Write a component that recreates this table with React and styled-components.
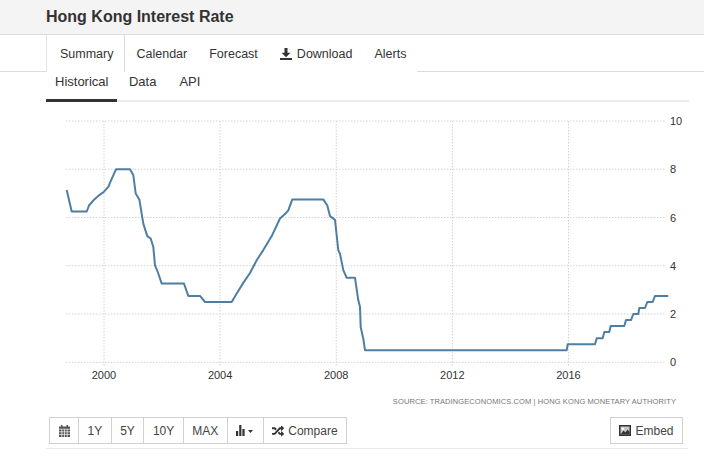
import React from 'react'
import styled, { createGlobalStyle } from 'styled-components'
import { FaRandom } from 'react-icons/fa'

const GlobalStyle = createGlobalStyle`
  body {
    margin: 0;
    background: #fff;
    font-family: "Liberation Sans", Arial, sans-serif;
    color: #333;
  }
`

// traced from the chart: [page x, rate]
const series = [
  [66.7, 7.14], [71.7, 6.25], [86.7, 6.25], [89, 6.5], [94.3, 6.75], [100, 6.95],
  [104, 7.07], [108.3, 7.27], [111.7, 7.6], [116, 8.0], [130, 8.0], [133.3, 7.76],
  [135.7, 7.0], [139.3, 6.75], [143.3, 5.75], [147.3, 5.23], [150.7, 5.13], [153.3, 4.78],
  [155, 4.02], [158.3, 3.68], [161.7, 3.26], [184, 3.26], [188.3, 2.75], [200, 2.75],
  [205, 2.5], [231.7, 2.5], [236.7, 2.85], [243.3, 3.29], [250, 3.7], [256.7, 4.23],
  [263.3, 4.65], [271.7, 5.23], [280, 5.96], [285, 6.14], [288.3, 6.3], [292.3, 6.75],
  [323.3, 6.75], [327.3, 6.5], [330, 6.06], [335, 5.9], [338.3, 4.65], [340, 4.5],
  [343.3, 3.82], [346.7, 3.5], [355, 3.5], [358.3, 2.57], [360, 2.3], [360.7, 1.46],
  [363.3, 0.98], [365, 0.5], [566.7, 0.5], [567.7, 0.75], [595, 0.75], [596.7, 1.0],
  [602.7, 1.0], [604.3, 1.25], [609.3, 1.25], [610.7, 1.5], [624.3, 1.5], [626, 1.75],
  [631, 1.75], [633.3, 2.0], [638.3, 2.0], [639.3, 2.25], [645, 2.25], [647.3, 2.5],
  [652.7, 2.5], [655, 2.75], [668.3, 2.75],
]

const X0 = 46
const yOf = (v) => 260.3 - v * 24.13
const years = [2000, 2004, 2008, 2012, 2016]
const xOfYear = (yr) => 58 + (yr - 2000) * 29.03
const ticks = [0, 2, 4, 6, 8, 10]

const tabs = ['Summary', 'Calendar', 'Forecast', 'Download', 'Alerts']
const subTabs = ['Historical', 'Data', 'API']
const ranges = ['1Y', '5Y', '10Y', 'MAX']

function DownloadIcon() {
  return (
    <svg width="12" height="12" viewBox="0 0 12 12">
      <rect x="4.5" y="0" width="3" height="5" fill="#333" />
      <polygon points="1.5,4.8 10.5,4.8 6,9.3" fill="#333" />
      <rect x="0" y="10" width="12" height="2" fill="#333" />
    </svg>
  )
}

function CalendarIcon() {
  return (
    <svg width="11" height="12" viewBox="0 0 11 12">
      <rect x="0" y="1.5" width="11" height="10.5" fill="#555" />
      <rect x="2" y="0" width="1.5" height="3" fill="#555" />
      <rect x="7.5" y="0" width="1.5" height="3" fill="#555" />
      <g stroke="#fff" strokeWidth="0.7">
        <line x1="0" y1="4.2" x2="11" y2="4.2" />
        <line x1="0" y1="6.8" x2="11" y2="6.8" />
        <line x1="0" y1="9.4" x2="11" y2="9.4" />
        <line x1="2.8" y1="4.2" x2="2.8" y2="12" />
        <line x1="5.5" y1="4.2" x2="5.5" y2="12" />
        <line x1="8.2" y1="4.2" x2="8.2" y2="12" />
      </g>
    </svg>
  )
}

function BarsIcon() {
  return (
    <svg width="18" height="11" viewBox="0 0 18 11">
      <rect x="0" y="6" width="2.2" height="5" fill="#333" />
      <rect x="3.2" y="0" width="2.2" height="11" fill="#333" />
      <rect x="6.4" y="4" width="2.2" height="7" fill="#333" />
      <polygon points="12,5 17,5 14.5,8" fill="#333" />
    </svg>
  )
}

function PictureIcon() {
  return (
    <svg width="12" height="11" viewBox="0 0 12 11">
      <rect x="0" y="0" width="12" height="11" fill="#333" />
      <rect x="1.5" y="1.5" width="9" height="8" fill="#c8c8c8" />
      <circle cx="3.8" cy="3.8" r="1.2" fill="#fff" />
      <polygon points="1.5,9.5 4.5,5.5 6.5,7.5 8.5,4.5 10.5,7 10.5,9.5" fill="#333" />
    </svg>
  )
}

function Chart() {
  const d = series
    .map(([x, v], i) => `${i ? 'L' : 'M'}${(x - X0).toFixed(1)},${yOf(v).toFixed(1)}`)
    .join(' ')
  return (
    <ChartSvg width="642" height="294" viewBox="0 0 642 294">
      <g stroke="#d2d2d2" strokeWidth="1" strokeDasharray="1.5,1.5">
        {ticks.map((t) => (
          <line key={t} x1="20" x2="619" y1={yOf(t)} y2={yOf(t)} />
        ))}
        {years.map((yr) => (
          <line key={yr} x1={xOfYear(yr)} x2={xOfYear(yr)} y1="19" y2="265" />
        ))}
      </g>
      <path d={d} fill="none" stroke="#4f7ea5" strokeWidth="2" strokeLinejoin="round" />
      <g fontSize="11" fill="#333" fontFamily="Liberation Sans, Arial, sans-serif">
        {ticks.map((t) => (
          <text key={t} x="624" y={yOf(t) + 4}>{t}</text>
        ))}
        {years.map((yr) => (
          <text key={yr} x={xOfYear(yr)} y="277" textAnchor="middle">{yr}</text>
        ))}
      </g>
    </ChartSvg>
  )
}

export default function App() {
  return (
    <>
      <GlobalStyle />
      <Header>
        <Title>Hong Kong Interest Rate</Title>
      </Header>
      <TabBar>
        {tabs.map((t, i) => (
          <Tab key={t} $active={i === 0}>
            {t === 'Download' && <DownloadIcon />}
            {t}
          </Tab>
        ))}
      </TabBar>
      <SubNav>
        {subTabs.map((t, i) => (
          <SubTab key={t} $active={i === 0}>{t}</SubTab>
        ))}
      </SubNav>
      <Chart />
      <Source>SOURCE: TRADINGECONOMICS.COM | HONG KONG MONETARY AUTHORITY</Source>
      <Toolbar>
        <ButtonGroup>
          <ToolButton><CalendarIcon /></ToolButton>
          {ranges.map((r) => (
            <ToolButton key={r}>{r}</ToolButton>
          ))}
          <ToolButton><BarsIcon /></ToolButton>
          <ToolButton><FaRandom size={12} color="#333" />Compare</ToolButton>
        </ButtonGroup>
        <ToolButton><PictureIcon />Embed</ToolButton>
      </Toolbar>
    </>
  )
}

const Header = styled.div`
  height: 34px;
  background: #f4f4f4;
  border-bottom: 1px solid #dcdcdc;
  padding-left: 46px;
  display: flex;
  align-items: center;
`
const Title = styled.h1`
  margin: 0;
  font-size: 16px;
  font-weight: bold;
  color: #333;
`
const TabBar = styled.div`
  display: flex;
  height: 36px;
  padding-left: 46px;
  border-bottom: 1px solid #dcdcdc;
`
const Tab = styled.div`
  display: flex;
  align-items: center;
  gap: 5px;
  height: 37px;
  padding: 0 10px;
  font-size: 12.5px;
  color: #333;
  background: #fff;
  border-left: 1px solid ${(p) => (p.$active ? '#e4e4e4' : 'transparent')};
  border-right: 1px solid ${(p) => (p.$active ? '#dcdcdc' : 'transparent')};
  box-sizing: border-box;
  margin-bottom: -1px;
  &:first-child {
    padding: 1px 11px 0 13px;
  }
`
const SubNav = styled.div`
  display: flex;
  margin: 0 15px 0 46px;
  border-bottom: 2px solid #ececec;
`
const SubTab = styled.div`
  font-size: 13px;
  line-height: 18px;
  padding: 1px ${(p) => (p.$active ? '9px' : '11.5px')} 8px;
  color: #333;
  margin-bottom: -2px;
  border-bottom: 3px solid ${(p) => (p.$active ? '#333' : 'transparent')};
`
const ChartSvg = styled.svg`
  display: block;
  margin-left: 46px;
`
const Source = styled.div`
  width: 630px;
  margin-left: 46px;
  text-align: right;
  font-size: 7.5px;
  line-height: 12px;
  letter-spacing: 0.1px;
  color: #777;
  white-space: nowrap;
`
const Toolbar = styled.div`
  display: flex;
  justify-content: space-between;
  align-items: center;
  margin: 9px 16px 0 46px;
  padding: 0 5px 4px 3px;
  border-bottom: 1px solid #e8e8e8;
`
const ButtonGroup = styled.div`
  display: flex;
`
const ToolButton = styled.div`
  display: flex;
  align-items: center;
  gap: 4px;
  height: 27px;
  box-sizing: border-box;
  padding: 0 8.5px;
  border: 1px solid #d0d0d0;
  background: #fff;
  font-size: 12px;
  color: #444;
  & + & {
    margin-left: -1px;
  }
`
